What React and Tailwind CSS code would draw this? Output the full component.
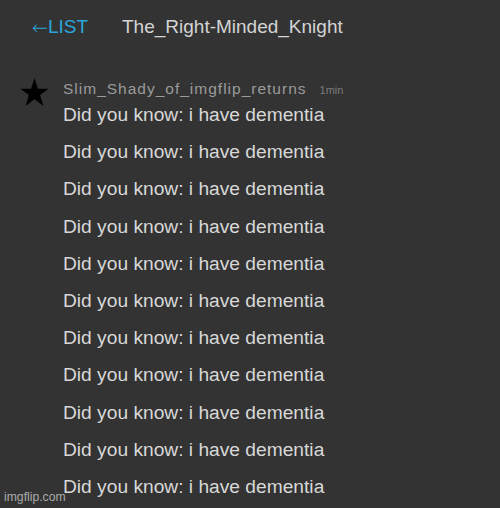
export default function App() {
  const lines = Array.from({ length: 11 });
  return (
    <div
      className="relative w-[500px] h-[508px] overflow-hidden bg-[#333333]"
      style={{ fontFamily: '"Liberation Sans", Arial, sans-serif' }}
    >
      {/* Header */}
      <div className="flex items-center h-[53px] pl-[32px] pt-[1px]">
        <span className="text-[#2aa6dc] text-[19px] w-[90px] flex items-center">
          <span style={{ fontFamily: '"DejaVu Sans", sans-serif' }} className="font-light">←</span>
          <span>LIST</span>
        </span>
        <span className="text-[#d4d4d4] text-[19px]">The_Right-Minded_Knight</span>
      </div>

      {/* Message */}
      <div className="flex pt-[24px]">
        <div className="w-[63px] pl-[19px]">
          <svg width="31" height="31" viewBox="0 0 24 24">
            <polygon
              points="12,1 14.7,9 23,9 16.3,14 18.9,22.5 12,17.3 5.1,22.5 7.7,14 1,9 9.3,9"
              fill="#000"
            />
          </svg>
        </div>
        <div className="flex flex-col">
          <div className="flex items-baseline h-[19px]">
            <span className="text-[#9b9b9b] text-[15.5px] tracking-[1px]">Slim_Shady_of_imgflip_returns</span>
            <span className="text-[#7d7d7d] text-[11px] ml-[13px]">1min</span>
          </div>
          {lines.map((_, i) => (
            <div key={i} className="text-[#d8d8d8] text-[19.2px] leading-[37.2px] h-[37.2px]">
              Did you know: i have dementia
            </div>
          ))}
        </div>
      </div>

      <span className="absolute left-[4px] bottom-[2px] text-[12.2px] text-[#ababab]">imgflip.com</span>
    </div>
  );
}
